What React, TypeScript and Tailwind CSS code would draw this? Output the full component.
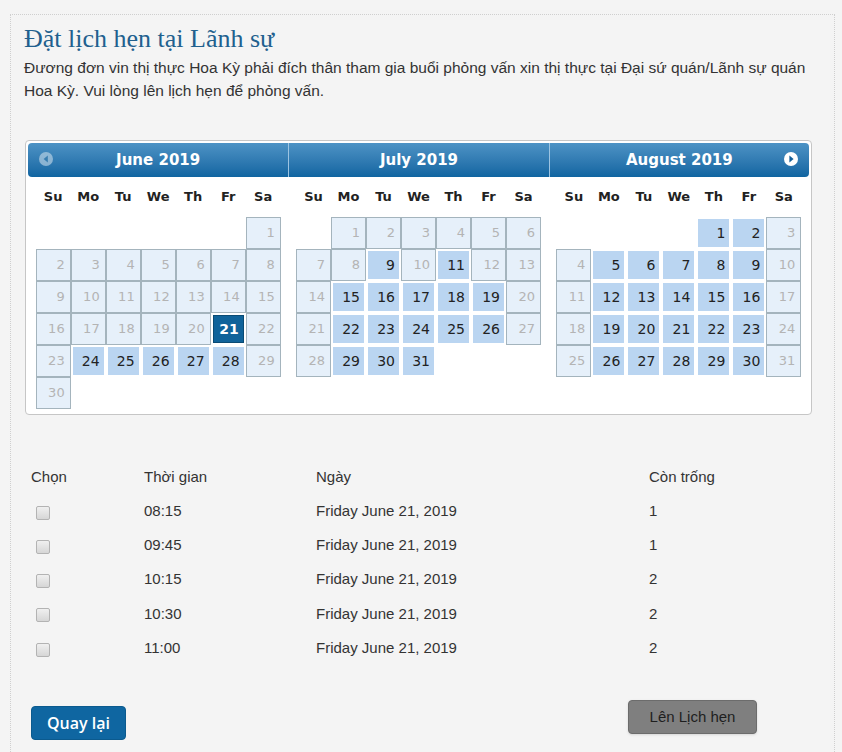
import React from 'react';

type Kind = 'e' | 'd' | 'a' | 's';
type Day = { n?: number; k: Kind };

// build a month grid from first weekday, day count and open days
const buildMonth = (start: number, days: number, open: number[], selected?: number) => {
  const cells: Day[] = [];
  for (let i = 0; i < start; i++) cells.push({ k: 'e' });
  for (let d = 1; d <= days; d++) {
    let k: Kind = 'd';
    if (d === selected) k = 's';
    else if (open.includes(d)) k = 'a';
    cells.push({ n: d, k });
  }
  return cells;
};

const range = (a: number, b: number) => Array.from({ length: b - a + 1 }, (_, i) => a + i);

const months = [
  { name: 'June 2019', cells: buildMonth(6, 30, [24, 25, 26, 27, 28], 21) },
  {
    name: 'July 2019',
    cells: buildMonth(1, 31, [9, 11, ...range(15, 19), ...range(22, 26), ...range(29, 31)]),
  },
  {
    name: 'August 2019',
    cells: buildMonth(4, 31, [1, 2, ...range(5, 9), ...range(12, 16), ...range(19, 23), ...range(26, 30)]),
  },
];

const weekDays = ['Su', 'Mo', 'Tu', 'We', 'Th', 'Fr', 'Sa'];

const slots = [
  { time: '08:15', free: 1 },
  { time: '09:45', free: 1 },
  { time: '10:15', free: 2 },
  { time: '10:30', free: 2 },
  { time: '11:00', free: 2 },
];

const DayCell = ({ day }: { day: Day }) => {
  if (day.k === 'e') return <div className="h-[32px]" />;
  if (day.k === 'd')
    return (
      <div className="h-[32px] border border-[#a4b4bd] bg-[#e6f0fa] pr-[5px] text-right text-[13px] leading-[30px] text-[#b4b4b4]">
        {day.n}
      </div>
    );
  return (
    <div className="h-[32px] p-[2px]">
      <div
        className={
          day.k === 's'
            ? 'h-full border border-[#0a4b74] bg-[#10639a] pr-[4px] text-right text-[14px] font-bold leading-[26px] text-white'
            : 'h-full bg-[#bad5f1] pr-[4px] text-right text-[14px] leading-[28px] text-[#222]'
        }
      >
        {day.n}
      </div>
    </div>
  );
};

const PrevIcon = () => (
  <svg width="16" height="16" viewBox="0 0 16 16" className="opacity-60">
    <circle cx="8" cy="8" r="7" fill="#c9dcea" />
    <path d="M9.8 4.6 L5.6 8 L9.8 11.4 Z" fill="#3d7fae" />
  </svg>
);

const NextIcon = () => (
  <svg width="16" height="16" viewBox="0 0 16 16">
    <circle cx="8" cy="8" r="7" fill="#ffffff" />
    <path d="M6.4 4.6 L10.6 8 L6.4 11.4 Z" fill="#15609a" />
  </svg>
);

const Calendar = () => (
  <div className="ml-[1px] w-[787px] rounded-[4px] border border-[#c6c6c6] bg-white px-[2px] pb-[5px] pt-[2px] font-['DejaVu_Sans',Verdana,sans-serif]">
    <div className="grid h-[34px] grid-cols-3 rounded-[4px] bg-gradient-to-b from-[#4d93c5] to-[#0f65a1] text-[15px] font-bold text-white">
      {months.map((m, i) => (
        <div
          key={m.name}
          className={`flex items-center justify-center ${i > 0 ? 'border-l border-[#9cc4e2]' : ''} relative`}
        >
          {i === 0 && (
            <span className="absolute left-[10px] top-[8px]">
              <PrevIcon />
            </span>
          )}
          {m.name}
          {i === 2 && (
            <span className="absolute right-[10px] top-[8px]">
              <NextIcon />
            </span>
          )}
        </div>
      ))}
    </div>
    <div className="grid grid-cols-3">
      {months.map((m) => (
        <div key={m.name} className="flex justify-center">
          <div className="w-[245px]">
            <div className="grid h-[40px] grid-cols-7 items-center text-center text-[13px] font-bold text-[#222]">
              {weekDays.map((w) => (
                <div key={w}>{w}</div>
              ))}
            </div>
            <div className="grid grid-cols-7">
              {m.cells.map((c, i) => (
                <DayCell key={i} day={c} />
              ))}
            </div>
          </div>
        </div>
      ))}
    </div>
  </div>
);

const App = () => {
  return (
    <div className="min-h-screen bg-[#f4f4f4] pt-[14px]">
      <div className="ml-[10px] w-[825px] border-l border-r border-t border-dotted border-[#cfcfcf] pb-[12px] pl-[13px] pt-[8px]">
        <h1 className="font-['Liberation_Serif',Georgia,serif] text-[26px] leading-[32px] text-[#21608e]">
          Đặt lịch hẹn tại Lãnh sự
        </h1>
        <p className="mt-[1px] w-[805px] font-['Liberation_Sans',Arial,sans-serif] text-[15.5px] leading-[23px] text-[#333]">
          Đương đơn vin thị thực Hoa Kỳ phải đích thân tham gia buổi phỏng vấn xin thị thực tại Đại sứ quán/Lãnh sự quán
          <br />
          Hoa Kỳ. Vui lòng lên lịch hẹn để phỏng vấn.
        </p>

        <div className="mt-[38px]">
          <Calendar />
        </div>

        <div className="ml-[7px] mt-[45px] font-['Liberation_Sans',Arial,sans-serif] text-[15px] text-[#333]">
          <div className="grid h-[34px] grid-cols-[113px_172px_333px_1fr] items-center">
            <div>Chọn</div>
            <div>Thời gian</div>
            <div>Ngày</div>
            <div>Còn trống</div>
          </div>
          {slots.map((s) => (
            <div key={s.time} className="grid h-[34.25px] grid-cols-[113px_172px_333px_1fr] items-center">
              <div className="pl-[5px] pt-[3px]">
                <div className="h-[14px] w-[14px] rounded-[2px] border border-[#b3b3b3] bg-gradient-to-b from-[#f0f0f0] to-[#d6d6d6]" />
              </div>
              <div>{s.time}</div>
              <div>Friday June 21, 2019</div>
              <div>{s.free}</div>
            </div>
          ))}
        </div>

        <div className="ml-[7px] mt-[35px] flex items-start">
          <button className="mt-[6px] h-[34px] w-[95px] rounded-[4px] border border-[#0b5a8e] bg-[#0f66a1] font-['Open_Sans',sans-serif] text-[16px] font-semibold text-white">
            Quay lại
          </button>
          <button className="ml-[502px] h-[34px] w-[129px] rounded-[4px] border border-[#6c6c6c] bg-[#7f7f7f] font-['Liberation_Sans',Arial,sans-serif] text-[15px] text-[#1e1e1e] shadow-sm">
            Lên Lịch hẹn
          </button>
        </div>
      </div>
    </div>
  );
};

export default App;
